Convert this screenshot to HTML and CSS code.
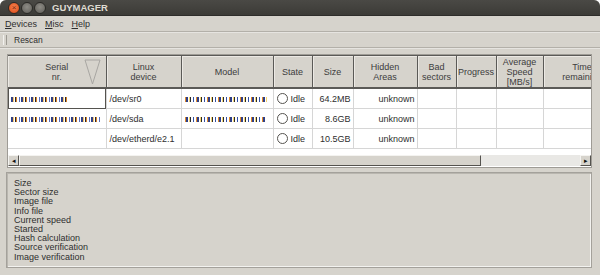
FILE: index.html
```html
<!DOCTYPE html>
<html lang="en">
<head>
    <meta charset="UTF-8">
    <title>GUYMAGER</title>
    <link rel="stylesheet" href="styles.css">
</head>
<body>
    <div class="window">
        <div class="titlebar">
            <div class="buttons">
                <span class="btn close">&#215;</span>
                <span class="btn"></span>
                <span class="btn"></span>
            </div>
            <span class="title">GUYMAGER</span>
        </div>
        <div class="menubar">
            <span><u>D</u>evices</span>
            <span><u>M</u>isc</span>
            <span><u>H</u>elp</span>
        </div>
        <div class="toolbar">
            <span class="handle"></span>
            <span class="rescan">Rescan</span>
        </div>

        <div class="devices">
            <div class="tablebox">
                <table>
                    <colgroup>
                        <col style="width:98px">
                        <col style="width:75px">
                        <col style="width:92px">
                        <col style="width:39px">
                        <col style="width:41px">
                        <col style="width:64px">
                        <col style="width:39px">
                        <col style="width:40px">
                        <col style="width:47px">
                        <col style="width:78px">
                    </colgroup>
                    <thead>
                        <tr>
                            <th>Serial<br>nr.<svg class="sort" width="17" height="26" viewBox="0 0 17 26"><path d="M1 1 L16 1 L8.5 25 Z" fill="none" stroke="#a8a6a2" stroke-width="1"/></svg></th>
                            <th>Linux<br>device</th>
                            <th>Model</th>
                            <th>State</th>
                            <th>Size</th>
                            <th>Hidden<br>Areas</th>
                            <th>Bad<br>sectors</th>
                            <th>Progress</th>
                            <th>Average<br>Speed<br>[MB/s]</th>
                            <th>Time<br>remaining</th>
                        </tr>
                    </thead>
                    <tbody>
                        <tr>
                            <td class="focus"><span class="blur" style="width:58px"></span></td>
                            <td>/dev/sr0</td>
                            <td><span class="blur b2" style="width:82px"></span></td>
                            <td><span class="radio"></span>Idle</td>
                            <td class="num">64.2MB</td>
                            <td class="num">unknown</td>
                            <td></td><td></td><td></td><td></td>
                        </tr>
                        <tr>
                            <td><span class="blur" style="width:90px"></span></td>
                            <td>/dev/sda</td>
                            <td><span class="blur b2" style="width:80px"></span></td>
                            <td><span class="radio"></span>Idle</td>
                            <td class="num">8.6GB</td>
                            <td class="num">unknown</td>
                            <td></td><td></td><td></td><td></td>
                        </tr>
                        <tr>
                            <td></td>
                            <td>/dev/etherd/e2.1</td>
                            <td></td>
                            <td><span class="radio"></span>Idle</td>
                            <td class="num">10.5GB</td>
                            <td class="num">unknown</td>
                            <td></td><td></td><td></td><td></td>
                        </tr>
                    </tbody>
                </table>
            </div>
            <div class="scrollbar">
                <span class="arrow">&#9666;</span>
                <span class="thumb"></span>
                <span class="trough"></span>
                <span class="arrow">&#9656;</span>
            </div>
        </div>

        <div class="info">
            <div>Size</div>
            <div>Sector size</div>
            <div>Image file</div>
            <div>Info file</div>
            <div>Current speed</div>
            <div>Started</div>
            <div>Hash calculation</div>
            <div>Source verification</div>
            <div>Image verification</div>
        </div>
    </div>
</body>
</html>
```

FILE: styles.css
```css
body{
    margin: 0;
    background: #ffffff;
    font-family: "Liberation Sans", Arial, sans-serif;
    color: #3c3c3c;
}
.window{
    width: 600px;
    height: 275px;
    background: #d6d3cc;
    border-radius: 6px 6px 0 0;
    overflow: hidden;
}
.titlebar{
    height: 16px;
    background: linear-gradient(#4a4945, #3c3b37);
    display: flex;
    align-items: center;
    border-bottom: 1px solid #2e2d2a;
    box-sizing: border-box;
}
.buttons{
    display: flex;
    gap: 1px;
    margin-left: 8px;
}
.btn{
    width: 10px;
    height: 10px;
    border-radius: 50%;
    background: radial-gradient(circle at 50% 40%, #8e8c86, #5d5b56);
    border: 0.5px solid #2b2a27;
    font-size: 8px;
    line-height: 10px;
    text-align: center;
    color: #7a2a10;
}
.btn.close{
    background: radial-gradient(circle at 50% 40%, #f5814f, #dd4814);
}
.title{
    margin-left: 6px;
    font-size: 9.5px;
    font-weight: bold;
    color: #dfdbd2;
}
.menubar{
    height: 15px;
    display: flex;
    align-items: center;
    gap: 8px;
    padding-left: 5px;
    font-size: 9px;
    color: #2e2e2e;
    border-bottom: 1px solid #b3b0a9;
    box-shadow: 0 1px 0 #e6e4e0;
}
.toolbar{
    height: 15px;
    display: flex;
    align-items: center;
    border-bottom: 1px solid #b3b0a9;
    box-shadow: 0 1px 0 #e6e4e0;
}
.handle{
    width: 2px;
    height: 10px;
    margin-left: 3px;
    border-left: 1px solid #f2f1ee;
    border-right: 1px solid #9c9992;
}
.rescan{
    margin-left: 7px;
    font-size: 8.5px;
    color: #2e2e2e;
}
.devices{
    margin: 6px 8px 0 7px;
    height: 112px;
    border: 1px solid #9e9b95;
    background: #ffffff;
    display: flex;
    flex-direction: column;
}
.tablebox{
    flex: 1;
    overflow: hidden;
}
table{
    border-collapse: collapse;
    table-layout: fixed;
    width: 613px;
    font-size: 9px;
}
th{
    height: 31px;
    background: #d6d3cc;
    font-weight: normal;
    color: #3c3c3c;
    line-height: 10px;
    border-right: 1px solid #5b5a57;
    border-bottom: 2px solid #5b5a57;
    border-top: 1px solid #5b5a57;
    box-shadow: inset 1px 1px 0 #ece9e4;
    position: relative;
    padding: 0;
    white-space: nowrap;
    overflow: hidden;
}
.sort{
    position: absolute;
    right: 5px;
    top: 3px;
}
td{
    height: 19px;
    padding: 0 3px;
    line-height: 12px;
    border-right: 1px solid #d6d6d6;
    border-bottom: 1px solid #d6d6d6;
    white-space: nowrap;
    overflow: hidden;
    color: #2e2e2e;
}
td.num{
    text-align: right;
    padding-right: 2px;
}
td.focus{
    outline: 1px solid #55534f;
    outline-offset: -1px;
}
.radio{
    display: inline-block;
    width: 9px;
    height: 9px;
    border: 1px solid #55534f;
    border-radius: 50%;
    vertical-align: -2px;
    margin-right: 3px;
    background: #ffffff;
}
.blur{
    display: inline-block;
    height: 5px;
    vertical-align: middle;
    background: repeating-linear-gradient(90deg, #2f3f86 0 2px, #f2c46a 2px 3px, #ffffff 3px 4px, #2a2a2a 4px 5px, #d9822b 5px 6px, #ffffff 6px 8px, #5a6fc0 8px 9px, #ffffff 9px 10px);
}
.blur.b2{
    background: repeating-linear-gradient(90deg, #e08a2a 0 1px, #2f3f86 1px 3px, #ffffff 3px 4px, #f4d470 4px 5px, #2a2a2a 5px 6px, #ffffff 6px 8px, #3050a8 8px 9px, #ffffff 9px 11px);
}
.scrollbar{
    height: 11px;
    display: flex;
    background: #e9e8e5;
    margin-bottom: 1px;
}
.arrow{
    width: 11px;
    height: 11px;
    box-sizing: border-box;
    background: #d6d3cc;
    border: 1px solid;
    border-color: #f4f3f0 #55534f #55534f #f4f3f0;
    font-size: 7px;
    line-height: 9px;
    text-align: center;
    color: #111;
}
.thumb{
    width: 462px;
    box-sizing: border-box;
    background: #d6d3cc;
    border: 1px solid;
    border-color: #f4f3f0 #55534f #55534f #f4f3f0;
}
.trough{
    flex: 1;
}
.info{
    margin: 4px 8px 0 6px;
    height: 96px;
    box-sizing: border-box;
    border: 1px solid #a4a19b;
    box-shadow: inset 1px 1px 0 #b9b6af, inset -1px -1px 0 #f3f2ef;
    padding: 6px 0 0 7px;
    font-size: 9px;
    line-height: 9.2px;
    color: #2e2e2e;
}
```
